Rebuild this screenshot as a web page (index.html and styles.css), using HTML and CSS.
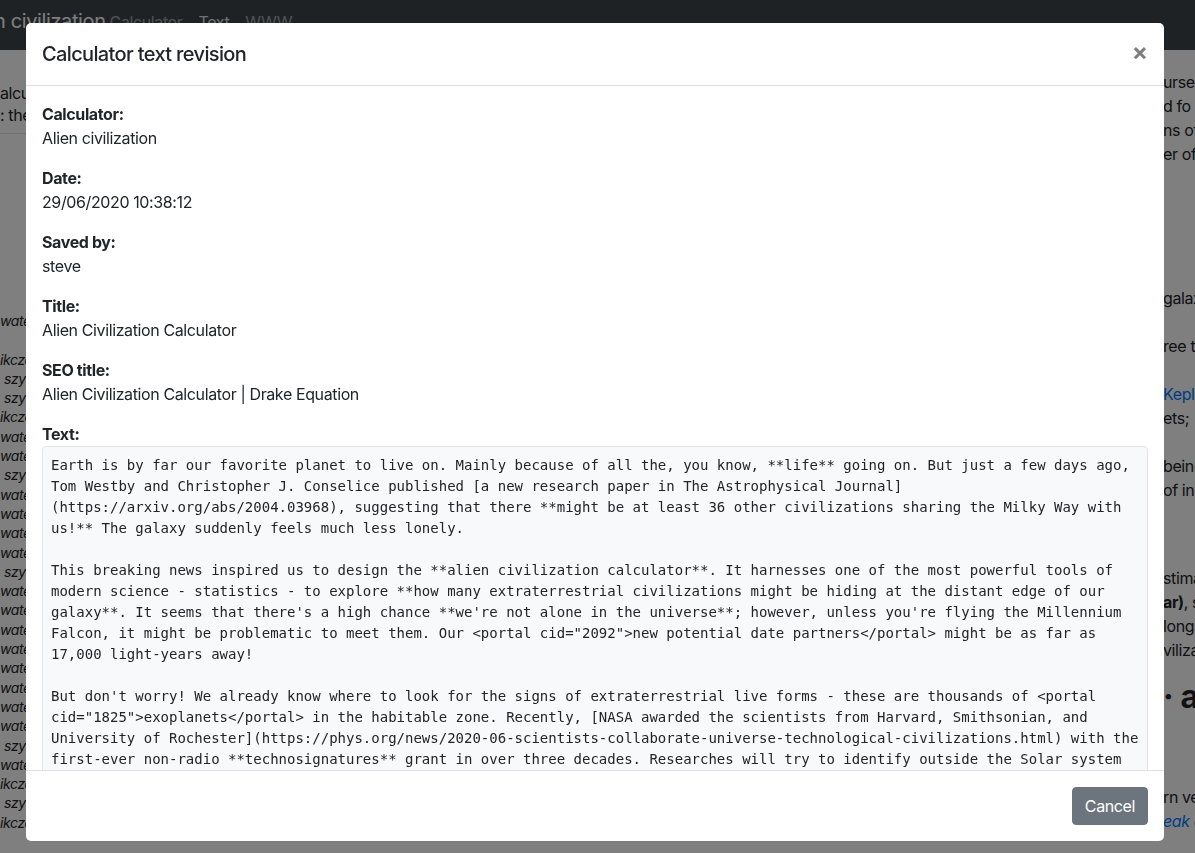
FILE: index.html
```html
<!DOCTYPE html>
<html lang="en">
<head>
  <meta charset="UTF-8">
  <meta name="viewport" content="width=device-width, initial-scale=1.0">
  <title>Calculator text revision</title>
  <link rel="stylesheet" href="styles.css">
</head>
<body>

<!-- Page behind the modal -->
<div class="page">
  <nav class="navbar">
    <span class="navbar-brand">n civilization</span>
    <a class="nav-link">Calculator</a>
    <a class="nav-link active">Text</a>
    <a class="nav-link">WWW</a>
  </nav>
  <div class="page-body">
    <aside class="page-left">
      <div class="page-left-head">
        <div>alcu</div>
        <div>: the</div>
      </div>
      <ul class="author-list">
        <li>watel</li>
        <li>&nbsp;</li>
        <li>ikczak</li>
        <li class="cut">szyk</li>
        <li class="cut">szyk</li>
        <li>ikczak</li>
        <li>watel</li>
        <li>watel</li>
        <li class="cut">szyk</li>
        <li>watel</li>
        <li>watel</li>
        <li>watel</li>
        <li>watel</li>
        <li class="cut">szyk</li>
        <li>watel</li>
        <li>watel</li>
        <li>watel</li>
        <li>watel</li>
        <li>watel</li>
        <li>watel</li>
        <li>watel</li>
        <li>watel</li>
        <li class="cut">szyk</li>
        <li>watel</li>
        <li>ikczak</li>
        <li class="cut">szyk</li>
        <li>ikczak</li>
      </ul>
    </aside>
    <main class="page-main"></main>
    <aside class="page-right">
      <div class="bg-line">urse</div>
      <div class="bg-line">d fo</div>
      <div class="bg-line">ns of</div>
      <div class="bg-line">er of</div>
      <div class="bg-line">&nbsp;</div>
      <div class="bg-line">&nbsp;</div>
      <div class="bg-line">&nbsp;</div>
      <div class="bg-line">&nbsp;</div>
      <div class="bg-line">&nbsp;</div>
      <div class="bg-line">galax</div>
      <div class="bg-line">&nbsp;</div>
      <div class="bg-line">ree t</div>
      <div class="bg-line">&nbsp;</div>
      <div class="bg-line"><a class="bg-link">Keple</a></div>
      <div class="bg-line">ets;</div>
      <div class="bg-line">&nbsp;</div>
      <div class="bg-line">being</div>
      <div class="bg-line">of in</div>
      <div class="bg-line">&nbsp;</div>
      <div class="bg-line">&nbsp;</div>
      <div class="bg-line spaced">stima</div>
      <div class="bg-line"><b>ar)</b>, s</div>
      <div class="bg-line">long</div>
      <div class="bg-line">viliza</div>
      <h2 class="bg-heading">· a</h2>
      <div class="bg-line after-heading">rn ve</div>
      <div class="bg-line"><a class="bg-link"><i>eak a</i></a></div>
    </aside>
  </div>
</div>

<div class="modal-backdrop"></div>

<section class="modal-dialog">
  <header class="modal-head">
    <h5 class="modal-title">Calculator text revision</h5>
    <button class="modal-close">&times;</button>
  </header>
  <section class="modal-content">
    <div class="info-row">
      <strong>Calculator:</strong>
      <span>Alien civilization</span>
    </div>
    <div class="info-row">
      <strong>Date:</strong>
      <span>29/06/2020 10:38:12</span>
    </div>
    <div class="info-row">
      <strong>Saved by:</strong>
      <span>steve</span>
    </div>
    <div class="info-row">
      <strong>Title:</strong>
      <span>Alien Civilization Calculator</span>
    </div>
    <div class="info-row">
      <strong>SEO title:</strong>
      <span>Alien Civilization Calculator | Drake Equation</span>
    </div>
    <div class="info-row">
      <strong>Text:</strong>
<pre class="revision-text">Earth is by far our favorite planet to live on. Mainly because of all the, you know, **life** going on. But just a few days ago, Tom Westby and Christopher J. Conselice published [a new research paper in The Astrophysical Journal](https://arxiv.org/abs/2004.03968), suggesting that there **might be at least 36 other civilizations sharing the Milky Way with us!** The galaxy suddenly feels much less lonely.

This breaking news inspired us to design the **alien civilization calculator**. It harnesses one of the most powerful tools of modern science - statistics - to explore **how many extraterrestrial civilizations might be hiding at the distant edge of our galaxy**. It seems that there's a high chance **we're not alone in the universe**; however, unless you're flying the Millennium Falcon, it might be problematic to meet them. Our &lt;portal cid="2092"&gt;new potential date partners&lt;/portal&gt; might be as far as 17,000 light-years away!

But don't worry! We already know where to look for the signs of extraterrestrial live forms - these are thousands of &lt;portal cid="1825"&gt;exoplanets&lt;/portal&gt; in the habitable zone. Recently, [NASA awarded the scientists from Harvard, Smithsonian, and University of Rochester](https://phys.org/news/2020-06-scientists-collaborate-universe-technological-civilizations.html) with the first-ever non-radio **technosignatures** grant in over three decades. Researches will try to identify outside the Solar system signs of technology, such as atmospheric pollution or large-scale solar panels.</pre>
    </div>
  </section>
  <footer class="modal-foot">
    <button class="btn-secondary">Cancel</button>
  </footer>
</section>

</body>
</html>
```

FILE: styles.css
```css
/* Page behind the modal */
body {
  margin: 0;
  font-family: Inter, "Noto Sans", sans-serif;
  font-size: 16px;
  letter-spacing: -0.024em;
  color: #212529;
  background-color: #fff;
  overflow: hidden;
}
.page {
  height: 853px;
}
.navbar {
  display: flex;
  align-items: baseline;
  height: 50px;
  padding-top: 9px;
  box-sizing: border-box;
  background-color: #3f454b;
  white-space: nowrap;
}
.navbar-brand {
  color: #fff;
  font-size: 20px;
  margin-left: -6px;
  margin-right: -4px;
}
.nav-link {
  color: rgba(255, 255, 255, 0.5);
  padding: 0 8px;
}
.nav-link.active {
  color: rgba(255, 255, 255, 0.85);
}
.page-body {
  display: flex;
}
.page-left {
  width: 26px;
  overflow: hidden;
  white-space: nowrap;
}
.page-left-head {
  padding: 32px 0 7px;
  line-height: 22px;
  border-bottom: 1px solid #dee2e6;
  width: 300px;
}
.author-list {
  list-style: none;
  margin: 177px 0 0;
  padding: 0;
  font-size: 14px;
  font-style: italic;
  line-height: 19.3px;
}
.author-list .cut {
  padding-left: 4px;
}
.page-main {
  flex: 1;
}
.page-right {
  width: 32px;
  padding-top: 20px;
  overflow: hidden;
  white-space: nowrap;
}
.bg-line {
  line-height: 24px;
}
.bg-line.spaced {
  margin-top: 16px;
}
.bg-link {
  color: #007bff;
}
.bg-heading {
  margin: 16px 0 0;
  font-size: 32px;
  font-weight: 700;
  line-height: 38px;
}
.bg-line.after-heading {
  margin-top: 69px;
}

/* Modal */
.modal-backdrop {
  position: fixed;
  top: 0;
  left: 0;
  width: 100%;
  height: 100%;
  background-color: rgba(0, 0, 0, 0.5);
}
.modal-dialog {
  position: fixed;
  top: 23px;
  left: 26px;
  width: 1138px;
  height: 818px;
  display: flex;
  flex-direction: column;
  background-color: #fff;
  border-radius: 5px;
  box-sizing: border-box;
  overflow: hidden;
}
.modal-head {
  display: flex;
  justify-content: space-between;
  align-items: flex-start;
  padding: 16px;
  border-bottom: 1px solid #dee2e6;
}
.modal-title {
  margin: 0;
  font-size: 20px;
  font-weight: 500;
  line-height: 30px;
  letter-spacing: -0.032em;
}
.modal-close {
  background: none;
  border: none;
  padding: 0;
  margin-top: -1px;
  font-family: inherit;
  font-size: 24px;
  font-weight: 700;
  line-height: 28px;
  color: #000;
  opacity: 0.5;
  cursor: pointer;
}
.modal-content {
  flex: 1;
  overflow-y: auto;
  scrollbar-width: none;
  padding: 16px;
}
.info-row {
  display: flex;
  flex-direction: column;
  line-height: 24px;
  margin-bottom: 16px;
}
.info-row strong {
  font-weight: 700;
}
.revision-text {
  margin: 0;
  padding: 8px 6px 8px 8px;
  font-family: "DejaVu Sans Mono", monospace;
  font-size: 14px;
  line-height: 21px;
  letter-spacing: 0;
  white-space: pre-wrap;
  color: #212529;
  background-color: #f8f9fa;
  border: 1px solid #e3e6e9;
  border-radius: 4px;
}
.modal-foot {
  display: flex;
  justify-content: flex-end;
  padding: 16px;
  border-top: 1px solid #dee2e6;
}
.btn-secondary {
  height: 38px;
  padding: 0 12px;
  font-family: inherit;
  font-size: 16px;
  letter-spacing: inherit;
  color: #fff;
  background-color: #6c757d;
  border: 1px solid #6c757d;
  border-radius: 4px;
  cursor: pointer;
}
```
